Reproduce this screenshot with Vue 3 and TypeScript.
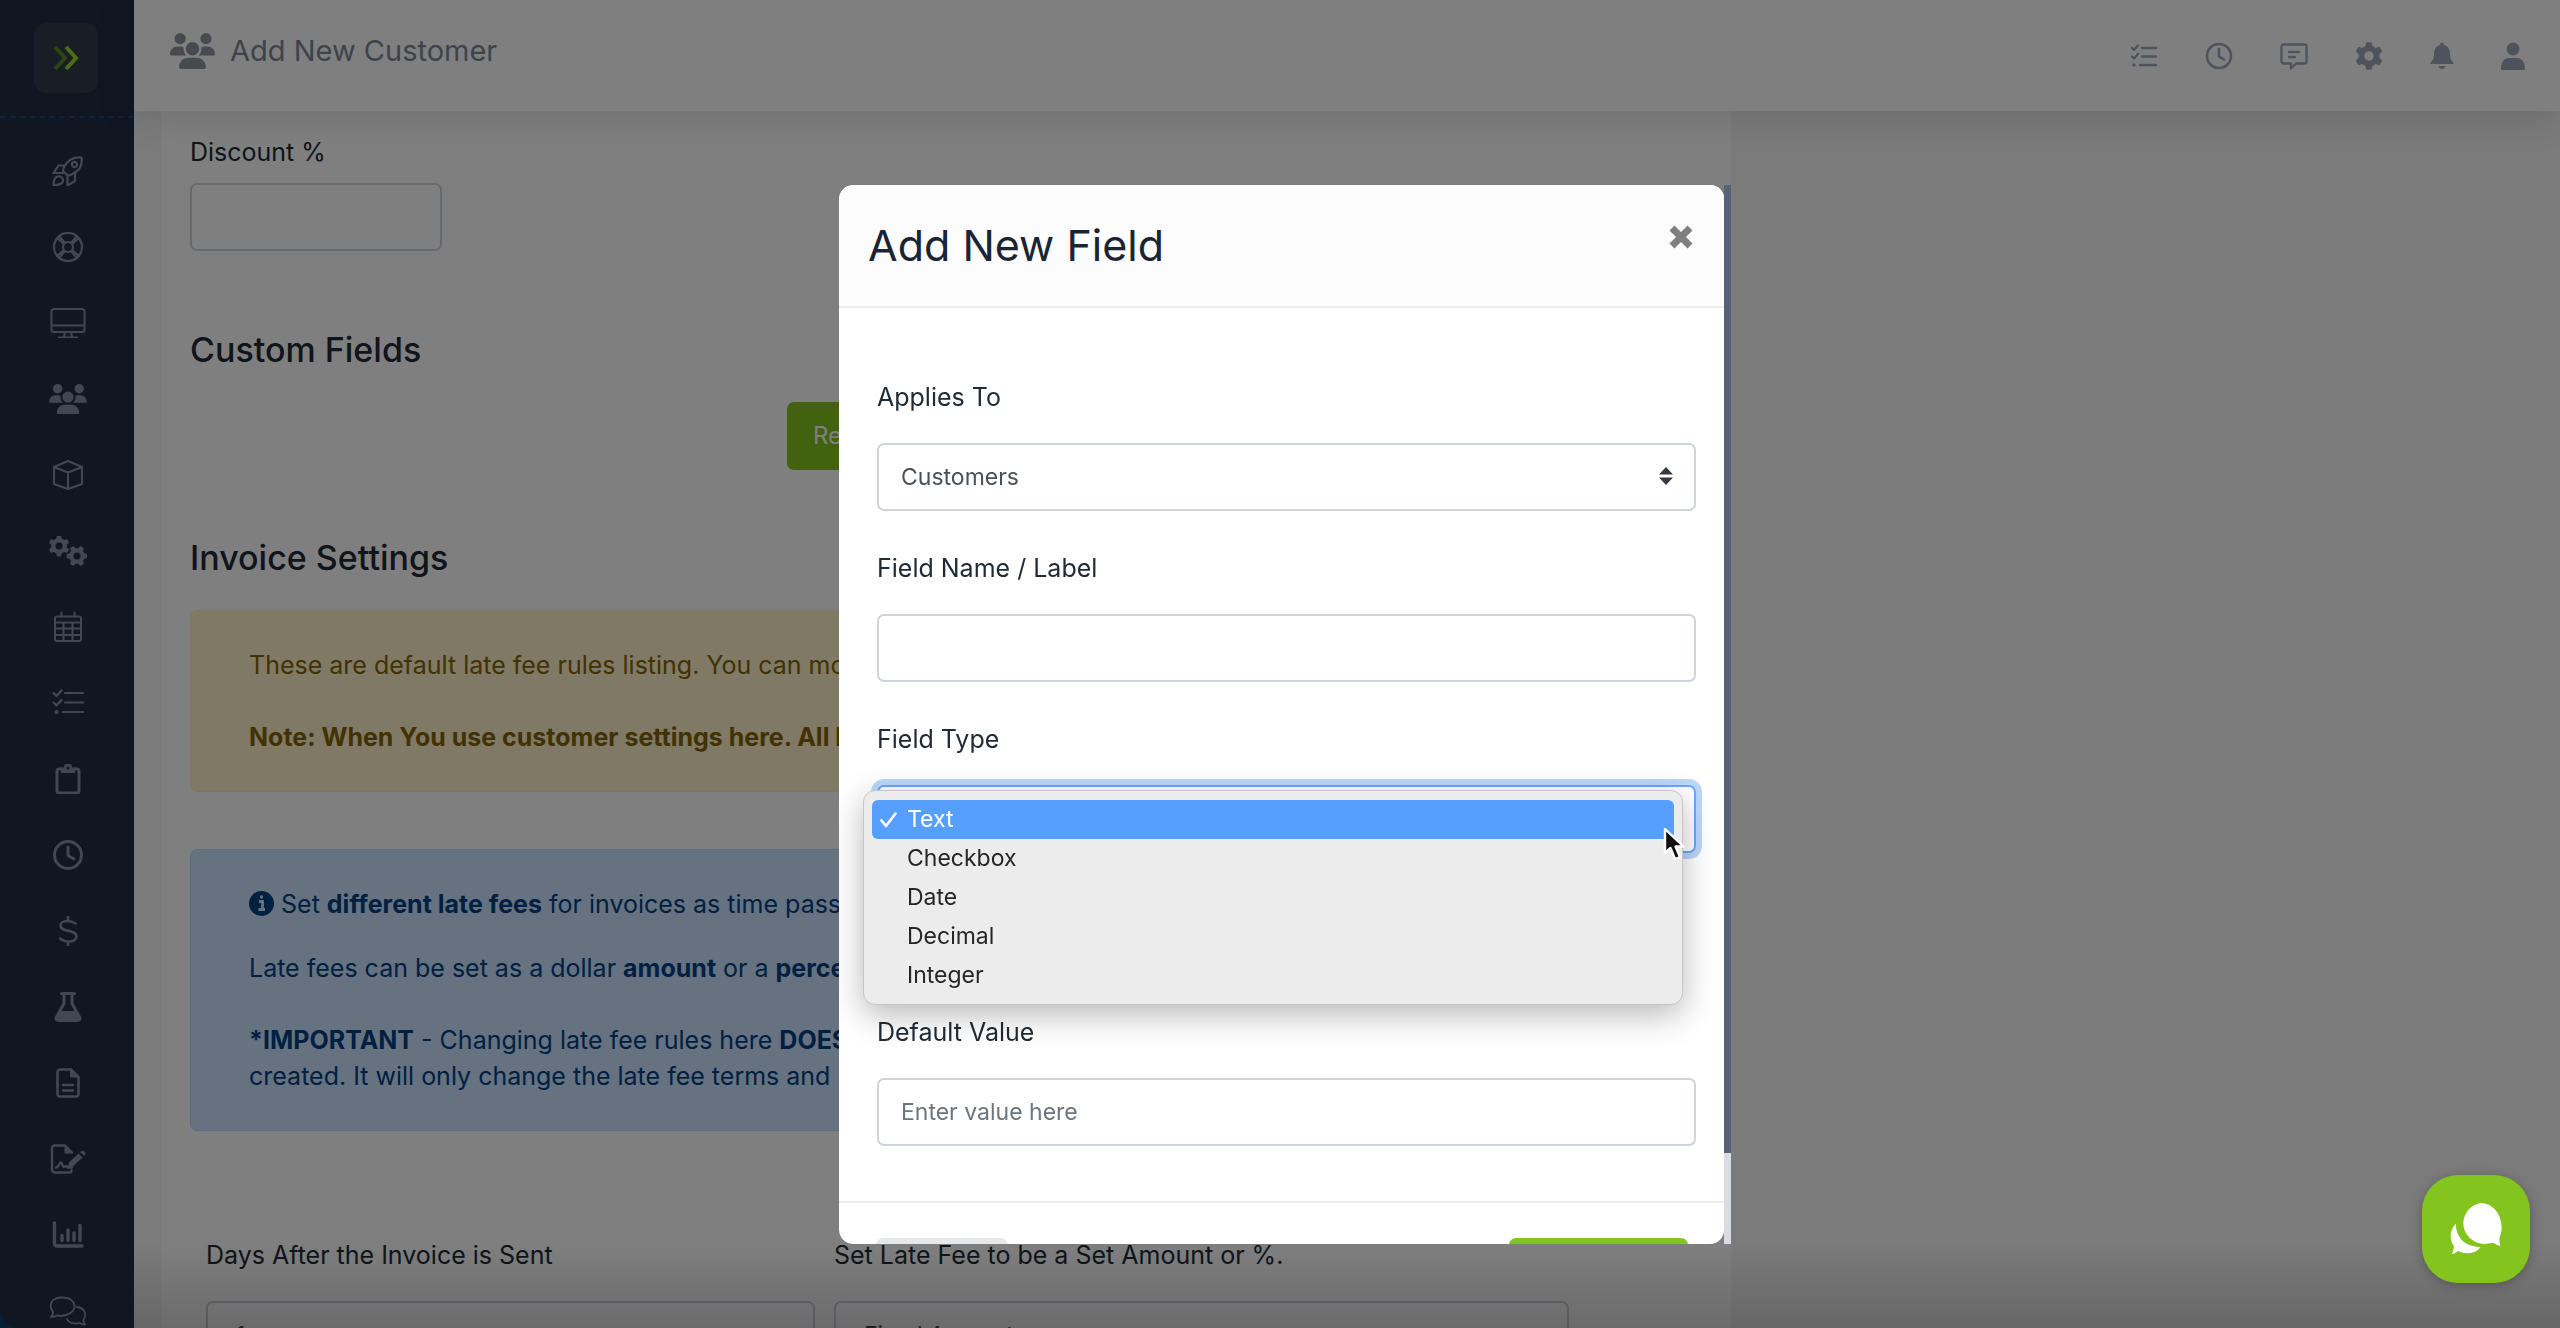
<script setup lang="ts">
import { ref } from 'vue'

interface Icon {
  label: string
  line?: string
  fill?: string
  weight?: number
  narrow?: boolean
}

// Closed circle as path data
const ring = (cx: number, cy: number, r: number): string =>
  `M${cx - r} ${cy}a${r} ${r} 0 1 0 ${2 * r} 0a${r} ${r} 0 1 0 ${-2 * r} 0z`

// Six-toothed cog with a round hole
const cog = (cx: number, cy: number, r: number, turn: number): string => {
  const pts: string[] = []
  for (let i = 0; i < 6; i++) {
    const mid = turn + i * 60
    const steps: [number, number][] = [[-19, 0.76], [-13, 0.96], [-8, 1], [8, 1], [13, 0.96], [19, 0.76]]
    for (const [deg, k] of steps) {
      const a = ((mid + deg) * Math.PI) / 180
      pts.push(`${(cx + r * k * Math.cos(a)).toFixed(2)} ${(cy + r * k * Math.sin(a)).toFixed(2)}`)
    }
  }
  return `M${pts.join('L')}z${ring(cx, cy, r * 0.34)}`
}

const usersPath =
  'M144 0a80 80 0 1 1 0 160A80 80 0 1 1 144 0zM512 0a80 80 0 1 1 0 160A80 80 0 1 1 512 0zM0 298.7C0 239.8 47.8 192 106.7 192h42.7c15.9 0 31 3.5 44.6 9.7c-1.3 7.2-1.9 14.7-1.9 22.3c0 38.2 16.8 72.5 43.3 96c-.2 0-.4 0-.7 0H21.3C9.6 320 0 310.4 0 298.7zM405.3 320c-.2 0-.4 0-.7 0c26.6-23.5 43.3-57.8 43.3-96c0-7.6-.7-15-1.9-22.3c13.6-6.3 28.7-9.7 44.6-9.7h42.7C592.2 192 640 239.8 640 298.7c0 11.8-9.6 21.3-21.3 21.3H405.3zM224 224a96 96 0 1 1 192 0 96 96 0 1 1 -192 0zM128 485.3C128 411.7 187.7 352 261.3 352H378.7C452.3 352 512 411.7 512 485.3c0 14.7-11.9 26.7-26.7 26.7H154.7c-14.7 0-26.7-11.9-26.7-26.7z'

const nav: Icon[] = [
  {
    label: 'Launch',
    line:
      'M32.5 1.5c-8-1-13 2-17 8.500c-1 2-1.500 3.500-1.500 5l4.500 4.500c1.500 0 3-.5 5-1.500c7.500-4 10-8.500 9-16.500zM15.500 9.500H9.500L4.500 17h9.500M18.500 19.500v10l7.500-4.500v-7M4.500 29c0-5.500 1-7.500 4-8.500s6 1.500 5.500 4.500c-.8 3.500-4 4-9.500 4z' +
      ring(25.5, 8.5, 2.6)
  },
  { label: 'Support', line: ring(19, 15, 14) + ring(19, 15, 5) + 'M8 6l7 6M10 4l6 7M28 4l-6 7M30 6l-7 6M8 24l7-6M10 26l6-7M28 26l-6-7M30 24l-7-6' },
  { label: 'Dashboard', line: 'M5 1h28a2.500 2.500 0 0 1 2.500 2.500v18a2.500 2.500 0 0 1-2.500 2.500H5a2.500 2.500 0 0 1-2.500-2.500v-18A2.500 2.500 0 0 1 5 1zM2.500 17.500h33M16 24l-1 5M22 24l1 5M10 29.500h18', weight: 2 },
  { label: 'Customers' },
  { label: 'Inventory', line: 'M19 1l14 6v17l-14 5l-14-5V7zM5 7l14 5.500l14-5.500M19 12.500V29', weight: 2 },
  { label: 'Services', fill: cog(10, 10, 10.5, 30) + cog(28, 20, 10.5, 0) },
  { label: 'Calendar', line: 'M8 4.500h22a2 2 0 0 1 2 2V27a2 2 0 0 1-2 2H8a2 2 0 0 1-2-2V6.500a2 2 0 0 1 2-2zM6 10.500h26M6 16.500h26M6 23h26M14.500 10.500V29M23.500 10.500V29M12.500 0v4.500M25.500 0v4.500', weight: 2 },
  { label: 'Tasks', line: 'M4.500 5l3 3l5-5.500M4.500 14.500l3 3l5-5.500M16 5h18M16 14.500h18M14 24h20', fill: ring(7.5, 24, 2) },
  { label: 'Orders', line: 'M13 5h-3a2 2 0 0 0-2 2v20a2 2 0 0 0 2 2h18a2 2 0 0 0 2-2V7a2 2 0 0 0-2-2h-3', fill: 'M12 3.500h3a4 4 0 0 1 8 0h3V9H12z' + ring(19, 4, 1.5), weight: 3 },
  { label: 'Time', line: ring(19, 15, 13.5) + 'M19 7v8.500l6 3.500', weight: 3 },
  { label: 'Payments', line: 'M26.500 7.500c-2-1.500-5-2.500-8-2.500c-4.500 0-7 2-7 4.500c0 7 16 3.500 16 11c0 3-3 5-7.500 5c-3.500 0-6.500-1-9-3M19 0v5M19 25.500v4.500', weight: 2.6 },
  { label: 'Lab', line: 'M12.500 1.500h13M15 2v9.500L7.500 25c-1 2 0 3.500 2 3.500h19c2 0 3-1.500 2-3.500L23 11.500V2', fill: 'M11.500 19h15l4 7c.5 1.500 0 2.500-2 2.500h-19c-2 0-2.500-1-2-2.500z', weight: 3 },
  { label: 'Documents', line: 'M22 1.500H11a2.500 2.500 0 0 0-2.500 2.500v22a2.500 2.500 0 0 0 2.500 2.500h16a2.500 2.500 0 0 0 2.500-2.500V9zM14 17h10M14 22.500h10', fill: 'M21 1v8.500h9z', weight: 2.6 },
  { label: 'Contracts', line: 'M22.500 26.500c0 1-1 2-2 2H5.500a2.500 2.500 0 0 1-2.500-2.500V4a2.500 2.500 0 0 1 2.500-2.500H16l7 7M7 23.500c2.500 0 3.500-5 5-5s1 4.500 3 4.500l2-1l2 1.500h4', fill: 'M15.500 1v8.500h8zM31 8l3-1.500l2.500 2.500l-1 3zM29.500 9.500l4 4L24 22.500l-5.500 1.500l1.500-5.500z', weight: 2.4 },
  { label: 'Reports', line: 'M5.500 3v20.500a2.500 2.500 0 0 0 2.500 2.500h25M13 15.500v5M19 10v10.500M25 13v7.500M31 5.500v15', weight: 3.4 },
  { label: 'Messages', line: 'M2 21c2-2 2.500-4 1.500-6C-1.500 8 4 1.500 13 1.500S26 6 25.500 11S18 20 12 20c-1.500 0-3-.5-4-.5c-1.500 1-3.500 1.500-6 1.500zM28 11c8 1 10 7.500 6.500 12.500c-.5 2 .5 3.500 1.500 5c-2 0-4-.5-5.500-1.500c-6 1.500-11-.5-12.500-4', weight: 1.8 }
]

const tools: Icon[] = [
  { label: 'Task list', line: 'M2 6l2 2l4-4.500M2 14.500l2 2l4-4.500M12 6h14M12 14.500h14M10 23h16', fill: ring(4, 23, 1.8) },
  { label: 'Recent activity', line: ring(14, 14, 12) + 'M14 7v7.500l5 3', weight: 2.6 },
  { label: 'Comments', line: 'M3.500 2.500h21a2 2 0 0 1 2 2v15a2 2 0 0 1-2 2H16l-5 5v-5H3.500a2 2 0 0 1-2-2v-15a2 2 0 0 1 2-2zM9 10h10M9 15h6', weight: 2.4 },
  { label: 'Settings', fill: cog(14, 14, 14, 30) },
  { label: 'Notifications', fill: 'M14 0.500c1.500 0 2 1 2 2.500c4 1 6 4.500 6 9c0 5 1.500 6.500 3.500 8.500c.5 1 0 1.500-1 1.500h-21c-1 0-1.500-.5-1-1.500c2-2 3.500-3.500 3.500-8.500c0-4.500 2-8 6-9c0-1.500.5-2.500 2-2.500zM10.500 24h7c-.5 4-6.500 4-7 0z', narrow: true },
  { label: 'Account', fill: ring(14, 7, 6.5) + 'M2 27c0-7 3-11 8-11h8c5 0 8 4 8 11c0 .5-.5 1-1 1H3c-.5 0-1-.5-1-1z', narrow: true }
]

const fieldTypes = ['Text', 'Checkbox', 'Date', 'Decimal', 'Integer']
const appliesTo = ref('Customers')
const fieldName = ref('')
const fieldType = ref('Text')
const defaultValue = ref('')
const discount = ref('')
const days = ref('1')
const feeMode = ref('Fixed Amount')
</script>

<template>
  <div class="app">
    <aside class="sidebar">
      <div class="brand">
        <button class="expand" type="button" aria-label="Expand menu">
          <svg width="26" height="26" viewBox="0 0 26 26" fill="none" stroke-width="4">
            <path d="M2 2l10 11L2 24" stroke="#5a8a26" />
            <path d="M13 2l10 11l-10 11" stroke="#94dc22" />
          </svg>
        </button>
      </div>
      <nav class="nav">
        <a v-for="item in nav" :key="item.label" href="#" :aria-label="item.label">
          <svg v-if="item.label === 'Customers'" width="38" height="30" viewBox="0 0 640 512"><path :d="usersPath" fill="currentColor" /></svg>
          <svg v-else width="38" height="30" viewBox="0 0 38 30">
            <path v-if="item.line" :d="item.line" fill="none" stroke="currentColor" :stroke-width="item.weight ?? 2.2" stroke-linecap="round" stroke-linejoin="round" />
            <path v-if="item.fill" :d="item.fill" fill="currentColor" fill-rule="evenodd" />
          </svg>
        </a>
      </nav>
    </aside>

    <div class="main">
      <header class="topbar">
        <div class="page-title">
          <svg width="45" height="36" viewBox="0 0 640 512"><path :d="usersPath" fill="currentColor" /></svg>
          <h1>Add New Customer</h1>
        </div>
        <div class="tools">
          <button v-for="tool in tools" :key="tool.label" type="button" :aria-label="tool.label">
            <svg :width="tool.narrow ? 24 : 28" height="28" :viewBox="tool.narrow ? '2 0 24 28' : '0 0 28 28'">
              <path v-if="tool.line" :d="tool.line" fill="none" stroke="currentColor" :stroke-width="tool.weight ?? 2.4" stroke-linecap="round" stroke-linejoin="round" />
              <path v-if="tool.fill" :d="tool.fill" fill="currentColor" fill-rule="evenodd" />
            </svg>
          </button>
        </div>
      </header>

      <div class="content">
        <main class="card">
          <label class="label" for="discount">Discount %</label>
          <input id="discount" v-model="discount" class="control discount" type="text" />

          <h2>Custom Fields</h2>
          <button class="refresh" type="button">Refresh Custom Fields</button>

          <h2 class="invoice">Invoice Settings</h2>
          <div class="alert warning">
            <p>These are default late fee rules listing. You can modify them for this customer.</p>
            <p class="spaced"><b>Note: When You use customer settings here. All late fee rules are replaced.</b></p>
          </div>
          <div class="alert info">
            <p>
              <svg class="info-mark" width="25" height="25" viewBox="0 0 25 25">
                <path :d="ring(12.5, 12.5, 12.5)" fill="currentColor" />
                <path d="M10 10.500h3.500v7.500M9.500 18.500h6.500M12.500 4.500v3" fill="none" stroke="#cce5ff" stroke-width="2.800" />
              </svg>
              Set <b>different late fees</b> for invoices as time passes.
            </p>
            <p class="near">Late fees can be set as a dollar <b>amount</b> or a <b>percentage</b>.</p>
            <p class="spaced"><b>*IMPORTANT</b> - Changing late fee rules here <b>DOES NOT</b> affect invoices already<br />created. It will only change the late fee terms and rules.</p>
          </div>

          <div class="fees">
            <div>
              <label class="label" for="days">Days After the Invoice is Sent</label>
              <input id="days" v-model="days" class="control fee" type="text" />
            </div>
            <div>
              <label class="label" for="mode">Set Late Fee to be a Set Amount or %.</label>
              <select id="mode" v-model="feeMode" class="control fee"><option>Fixed Amount</option></select>
            </div>
          </div>
        </main>
      </div>
    </div>

    <div class="page-fade"></div>

    <div class="overlay">
      <section class="modal" role="dialog" aria-labelledby="modal-title">
        <div class="pane">
          <header class="modal-head">
            <h2 id="modal-title">Add New Field</h2>
            <button class="close" type="button" aria-label="Close">
              <svg width="24" height="24" viewBox="0 0 24 24"><path d="M3 3l18 18M21 3L3 21" stroke="#7f7f7f" stroke-width="7" /></svg>
            </button>
          </header>
          <form class="modal-body" @submit.prevent>
            <div class="field">
              <label class="label" for="applies">Applies To</label>
              <div class="select-wrap">
                <select id="applies" v-model="appliesTo" class="control"><option>Customers</option></select>
                <svg class="caret" width="14" height="18" viewBox="0 0 14 18"><path d="M0 7.500L7 0l7 7.500zM0 10.500L7 18l7-7.500z" fill="#343a40" /></svg>
              </div>
            </div>
            <div class="field">
              <label class="label" for="name">Field Name / Label</label>
              <input id="name" v-model="fieldName" class="control" type="text" />
            </div>
            <div class="field type">
              <label class="label" for="type">Field Type</label>
              <div class="select-wrap">
                <select id="type" v-model="fieldType" class="control focused">
                  <option v-for="t in fieldTypes" :key="t">{{ t }}</option>
                </select>
                <ul class="menu" role="listbox" aria-label="Field Type">
                  <li v-for="t in fieldTypes" :key="t" role="option" :aria-selected="t === fieldType" :class="{ active: t === fieldType }" @click="fieldType = t">
                    <svg width="17" height="16" viewBox="0 0 17 16"><path v-if="t === fieldType" d="M1.500 8.500l4.500 5.500L15.500 1.500" fill="none" stroke="#fff" stroke-width="2.600" stroke-linecap="round" stroke-linejoin="round" /></svg>
                    {{ t }}
                  </li>
                </ul>
                <svg class="pointer" width="24" height="36" viewBox="0 0 24 36"><path d="M2 2v24l5.500-5l4.500 11l5-2l-4.500-10.500h8z" fill="#111" stroke="#fff" stroke-width="2.400" stroke-linejoin="round" /></svg>
              </div>
            </div>
            <div class="field">
              <label class="label" for="default">Default Value</label>
              <input id="default" v-model="defaultValue" class="control" type="text" placeholder="Enter value here" />
            </div>
          </form>
          <footer class="modal-foot">
            <button class="cancel" type="button" aria-label="Cancel"></button>
            <button class="save" type="button" aria-label="Save"></button>
          </footer>
        </div>
        <div class="track"><div class="thumb"></div><div class="rest"></div></div>
      </section>
    </div>

    <button class="chat" type="button" aria-label="Open chat">
      <svg width="54" height="54" viewBox="0 0 54 54" fill="#fff">
        <path d="M31.500 1a21 20.500 0 1 0 8 40.500c3-.5 4.500-1 7 .5c1.500 1 3 1.500 5 2c-.8-2.500-1.200-5-1-8.500C57 21 48 1 31.500 1z" />
        <path d="M7 21.500c-7 7-6.500 17-2 22.500c-.5 3.500-1 5.500-2 8c2 0 4-1.500 6-3c9 4 18 2.500 22.500-4C17 45 6.500 36 7 21.500z" />
      </svg>
    </button>
  </div>
</template>

<style>
body {
  margin: 0;
}
</style>

<style scoped>
.app,
.app * {
  box-sizing: border-box;
}

.app {
  display: flex;
  height: 100vh;
  overflow: hidden;
  background: #113a6c;
  color: #212b36;
  font-family: Inter, "Liberation Sans", sans-serif;
  font-size: 25px;
  line-height: 36px;
}

h1,
h2,
p,
ul {
  margin: 0;
  padding: 0;
}

button {
  padding: 0;
  border: 0;
  background: none;
  color: inherit;
  font: inherit;
}

svg {
  display: block;
}

.sidebar {
  flex: none;
  width: 134px;
  overflow: hidden;
  border-radius: 0 0 0 20px;
  background: #202e44;
  color: #828ea6;
}

.brand {
  height: 118px;
  padding: 23px 0 0 34px;
  border-bottom: 2px dashed #1d4674;
}

.expand {
  display: grid;
  place-items: center;
  width: 64px;
  height: 70px;
  border-radius: 12px;
  background: #323a4a;
}

.nav {
  display: flex;
  flex-direction: column;
  align-items: center;
  gap: 46px;
  padding: 38px 0 0 2px;
}

.nav a {
  color: inherit;
}

.main {
  flex: 1;
  min-width: 0;
  display: flex;
  flex-direction: column;
  background: #f6f6f6;
}

.topbar {
  position: relative;
  display: flex;
  justify-content: space-between;
  flex: none;
  height: 111px;
  padding: 0 35px 0 36px;
  background: #fff;
  box-shadow: 0 4px 36px rgba(30, 40, 60, 0.16);
}

.page-title {
  display: flex;
  gap: 15px;
  height: 101px;
  align-items: center;
  color: #8e949f;
}

.page-title h1 {
  color: #7c8796;
  font-size: 29px;
  font-weight: 400;
}

.tools {
  display: flex;
  align-items: center;
  gap: 47px;
  color: #9ea8b8;
}

.content {
  flex: 1;
  min-height: 0;
  display: grid;
  grid-template-columns: 27px minmax(0, 1570fr) minmax(0, 829fr);
}

.card {
  grid-column: 2;
  display: flex;
  flex-direction: column;
  min-width: 0;
  padding: 23px 29px 0;
  background: #fff;
}

.label {
  display: block;
}

.control {
  display: block;
  width: 100%;
  height: 68px;
  padding: 0 22px;
  border: 2px solid #ced4da;
  border-radius: 7px;
  background: #fff;
  color: #495057;
  font: inherit;
  font-size: 23px;
  appearance: none;
  outline: none;
}

.control::placeholder {
  color: #6c757d;
  opacity: 1;
}

.discount {
  flex: none;
  width: 252px;
  margin-top: 13px;
}

.card h2 {
  margin-top: 79px;
  font-size: 34px;
  font-weight: 500;
  line-height: 40px;
}

.card .invoice {
  margin-top: 68px;
}

.refresh {
  flex: none;
  align-self: center;
  width: 318px;
  height: 68px;
  margin-top: 32px;
  padding-left: 26px;
  border-radius: 7px;
  background: #84c41e;
  color: #fff;
  font-size: 24px;
  text-align: left;
}

.alert {
  flex: none;
  overflow: hidden;
  padding: 36px 58px;
  border: 1px solid;
  border-radius: 7px;
  white-space: nowrap;
}

.warning {
  margin-top: 32px;
  border-color: #ffeeba;
  background: #fff3cd;
  color: #856404;
}

.info {
  margin-top: 57px;
  border-color: #b8daff;
  background: #cce5ff;
  color: #004085;
}

.info-mark {
  display: inline-block;
  vertical-align: -3px;
}

.near {
  margin-top: 28px;
}

.spaced {
  margin-top: 36px;
}

.fees {
  display: grid;
  grid-template-columns: 609fr 735fr 114fr;
  gap: 19px;
  margin-top: 106px;
  padding-left: 16px;
}

.fee {
  margin-top: 28px;
  padding: 0 28px;
}

.page-fade {
  position: fixed;
  right: 0;
  bottom: 0;
  left: 134px;
  height: 84px;
  background: linear-gradient(rgba(0, 0, 0, 0), rgba(0, 0, 0, 0.16));
}

.overlay {
  position: fixed;
  inset: 0;
  display: flex;
  justify-content: center;
  align-items: flex-start;
  padding: 185px 0 0 10px;
  background: rgba(0, 0, 0, 0.5);
}

.modal {
  display: flex;
  width: 892px;
  height: calc(100vh - 269px);
  overflow: hidden;
  border-radius: 14px 0 0 14px;
}

.pane {
  flex: 1;
  min-width: 0;
  overflow: hidden;
  border-radius: 14px;
  background: #fff;
}

.modal-head {
  display: flex;
  justify-content: space-between;
  height: 123px;
  padding: 34px 31px 34px 29px;
  border-bottom: 2px solid #ededed;
  background: #fcfcfc;
}

.modal-head h2 {
  color: #1a2433;
  font-size: 43px;
  font-weight: 400;
  line-height: 52px;
}

.close {
  height: 36px;
}

.modal-body {
  display: flex;
  flex-direction: column;
  gap: 39px;
  padding: 71px 28px 55px 38px;
}

.field .control {
  margin-top: 28px;
}

.type {
  margin-bottom: 122px;
}

.select-wrap {
  position: relative;
}

.caret {
  position: absolute;
  top: 24px;
  right: 23px;
}

.control.focused {
  border-color: #66a9ff;
  box-shadow: 0 0 0 6px #bcd7fa;
}

.menu {
  position: absolute;
  top: 5px;
  right: 13px;
  left: -14px;
  padding: 9px 8px;
  border: 1px solid #c4c6c8;
  border-radius: 12px;
  background: #ececec;
  box-shadow: 0 10px 32px rgba(0, 0, 0, 0.28);
  color: #262626;
  font-size: 23px;
  line-height: 39px;
  list-style: none;
}

.menu li {
  display: flex;
  align-items: center;
  gap: 10px;
  padding-left: 8px;
  border-radius: 6px;
}

.menu .active {
  background: #579fff;
  color: #fff;
}

.pointer {
  position: absolute;
  top: 42px;
  right: 9px;
}

.modal-foot {
  display: flex;
  justify-content: space-between;
  padding: 35px 36px 36px 37px;
  border-top: 2px solid #ededed;
}

.modal-foot button {
  height: 68px;
  border-radius: 7px;
}

.cancel {
  width: 132px;
  background: #e6e8ea;
}

.modal-foot .save {
  width: 179px;
  background: #84c41e;
}

.track {
  flex: none;
  display: flex;
  flex-direction: column;
  width: 7px;
}

.thumb {
  flex: 32;
  background: #566377;
}

.rest {
  flex: 3;
  background: #d9dce0;
}

.chat {
  position: fixed;
  right: 30px;
  bottom: 45px;
  display: grid;
  place-items: center;
  width: 108px;
  height: 108px;
  border-radius: 36px;
  background: #84c41e;
  box-shadow: 0 2px 12px rgba(0, 0, 0, 0.25);
}
</style>
